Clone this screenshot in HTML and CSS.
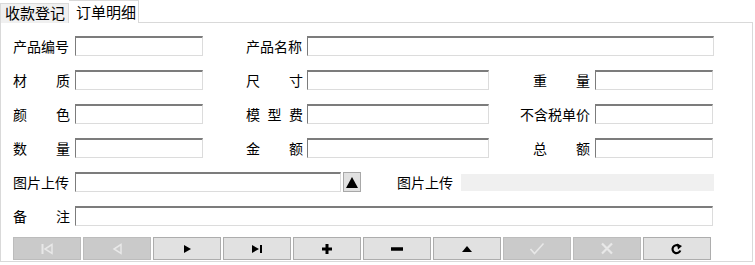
FILE: index.html
```html
<!DOCTYPE html>
<html lang="zh">
<head>
<meta charset="utf-8">
<title>订单明细</title>
<link rel="stylesheet" href="styles.css">
</head>
<body>
<div class="tabs">
  <div class="tab">收款登记</div>
  <div class="tab active">订单明细</div>
</div>
<div class="panel">
  <div class="row">
    <label class="lbl"><span>产品编号</span></label><input class="inp w128">
    <label class="lbl c2"><span>产品名称</span></label><input class="inp w407">
  </div>
  <div class="row">
    <label class="lbl"><span>材</span><span>质</span></label><input class="inp w128">
    <label class="lbl c2"><span>尺</span><span>寸</span></label><input class="inp w182">
    <label class="lbl c3"><span>重</span><span>量</span></label><input class="inp w118">
  </div>
  <div class="row">
    <label class="lbl"><span>颜</span><span>色</span></label><input class="inp w128">
    <label class="lbl c2"><span>模</span><span>型</span><span>费</span></label><input class="inp w182">
    <label class="lbl c3 wide"><span>不含税单价</span></label><input class="inp w118">
  </div>
  <div class="row">
    <label class="lbl"><span>数</span><span>量</span></label><input class="inp w128">
    <label class="lbl c2"><span>金</span><span>额</span></label><input class="inp w182">
    <label class="lbl c3"><span>总</span><span>额</span></label><input class="inp w118">
  </div>
  <div class="row">
    <label class="lbl"><span>图片上传</span></label><input class="inp w266">
    <button class="upbtn"><svg width="12" height="11" viewBox="0 0 12 11"><path d="M6 0 L12 11 L0 11 Z" fill="#000"/></svg></button>
    <span class="lbl2">图片上传</span>
    <div class="imgbox"></div>
  </div>
  <div class="row">
    <label class="lbl"><span>备</span><span>注</span></label><input class="inp w638">
  </div>
  <div class="nav">
    <button class="nb dis"><svg width="14" height="12" viewBox="0 0 14 12"><path d="M2.5 1v10" stroke="#e8e8e8" stroke-width="2" fill="none"/><path d="M12 1.5 L5 6 L12 10.5 Z" stroke="#e8e8e8" stroke-width="1.5" fill="none"/></svg></button>
    <button class="nb dis"><svg width="12" height="12" viewBox="0 0 12 12"><path d="M10 1.5 L3 6 L10 10.5 Z" stroke="#e8e8e8" stroke-width="1.5" fill="none"/></svg></button>
    <button class="nb"><svg width="10" height="10" viewBox="0 0 10 10"><path d="M2 1 L9 5 L2 9 Z" fill="#000"/></svg></button>
    <button class="nb"><svg width="12" height="10" viewBox="0 0 12 10"><path d="M1 1 L8 5 L1 9 Z" fill="#000"/><rect x="9" y="1" width="2" height="8" fill="#000"/></svg></button>
    <button class="nb"><svg width="12" height="12" viewBox="0 0 12 12"><path d="M6 1v10M1 6h10" stroke="#000" stroke-width="3"/></svg></button>
    <button class="nb"><svg width="14" height="12" viewBox="0 0 14 12"><path d="M1 6h12" stroke="#000" stroke-width="3.5"/></svg></button>
    <button class="nb"><svg width="12" height="8" viewBox="0 0 12 8"><path d="M6 1 L11 7 L1 7 Z" fill="#000"/></svg></button>
    <button class="nb dis"><svg width="16" height="13" viewBox="0 0 16 13"><path d="M1.5 7 L5.5 11.5 L14.5 1.5" stroke="#e8e8e8" stroke-width="1.6" fill="none"/></svg></button>
    <button class="nb dis"><svg width="14" height="13" viewBox="0 0 14 13"><path d="M2 1.5 L12 11.5 M12 1.5 L2 11.5" stroke="#e8e8e8" stroke-width="2.2" fill="none"/></svg></button>
    <button class="nb"><svg width="12" height="12" viewBox="0 0 12 12"><path d="M9.3 7.5 A4 4 0 1 1 8 3" stroke="#000" stroke-width="2.2" fill="none"/><path d="M6 0.5 L11 3 L7 6.5 Z" fill="#000"/></svg></button>
  </div>
</div>
</body>
</html>
```
FILE: styles.css
```css
* { box-sizing: border-box; }
html, body { margin: 0; padding: 0; background: #fff; }
body {
  font-family: "Noto Sans CJK SC", "Noto Sans", sans-serif;
  font-size: 14px;
  color: #000;
  width: 755px;
  height: 265px;
  overflow: hidden;
}
.tabs {
  display: flex;
  align-items: flex-end;
  height: 23px;
  position: relative;
  z-index: 1;
}
.tab {
  height: 20px;
  width: 69px;
  background: #f0f0f0;
  border: 1px solid #d9d9d9;
  border-bottom: none;
  font-size: 15px;
  line-height: 18px;
  padding-left: 4px;
}
.tab.active {
  height: 23px;
  width: 70px;
  background: #fff;
  border-left: none;
  padding-left: 7px;
  line-height: 22px;
}
.panel {
  margin-top: -1px;
  width: 753px;
  height: 240px;
  border: 1px solid #d9d9d9;
  padding: 13px 0 0 12px;
}
.row {
  display: flex;
  align-items: center;
  height: 20px;
  margin-bottom: 14px;
}
.row:nth-child(6) { margin-bottom: 11px; }
.lbl {
  width: 57px;
  display: flex;
  justify-content: space-between;
  margin-right: 5px;
  white-space: nowrap;
  line-height: 20px;
}
.lbl.c2 { margin-left: 43px; margin-right: 4px; }
.lbl.c3 { margin-left: 44px; }
.lbl.wide { justify-content: flex-end; }
.lbl.wide span { margin-left: -20px; }
.inp {
  height: 20px;
  border-style: solid;
  border-width: 2px 1px 1px 1px;
  border-color: #7c7c7c #dcdcdc #dcdcdc #7c7c7c;
  background: #fff;
  padding: 0 2px;
  margin: 0;
  font: inherit;
  outline: none;
}
.w128 { width: 128px; }
.w182 { width: 182px; }
.w118 { width: 118px; }
.w407 { width: 407px; }
.w266 { width: 266px; }
.w638 { width: 638px; }
.upbtn {
  width: 18px;
  height: 20px;
  margin-left: 2px;
  padding: 0;
  background: #e1e1e1;
  border: 1px solid #a8a8a8;
  display: flex;
  align-items: center;
  justify-content: center;
}
.lbl2 {
  margin-left: 36px;
  width: 64px;
  line-height: 20px;
}
.imgbox {
  width: 253px;
  height: 17px;
  background: #f0f0f0;
}
.nav {
  display: flex;
  gap: 2px;
  padding-left: 0;
}
.nb {
  width: 68px;
  height: 23px;
  padding: 0;
  margin: 0;
  background: #e1e1e1;
  border: 1px solid #adadad;
  display: flex;
  align-items: center;
  justify-content: center;
}
.nb.dis {
  background: #cacaca;
  border-color: #bcbcbc;
}
```
